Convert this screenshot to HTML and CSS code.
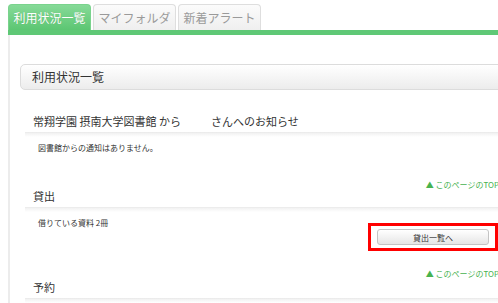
FILE: index.html
```html
<!DOCTYPE html>
<html lang="ja">
<head>
  <meta charset="UTF-8" />
  <title>利用状況一覧</title>
  <link rel="stylesheet" href="styles.css">
</head>
<body>
  <div class="page">
    <!-- Tabs -->
    <div class="tabs">
      <a class="tab active">利用状況一覧</a>
      <a class="tab">マイフォルダ</a>
      <a class="tab">新着アラート</a>
    </div>
    <div class="tab-bar"></div>

    <div class="content">
      <div class="panel-head">利用状況一覧</div>

      <!-- Notice -->
      <div class="section first">
        <h2>常翔学園 摂南大学図書館 から<span class="user"></span>さんへのお知らせ</h2>
        <p class="note">図書館からの通知はありません。</p>
        <a class="toplink">▲ このページのTOP</a>
      </div>

      <!-- Loans -->
      <div class="section">
        <h2>貸出</h2>
        <p class="note">借りている資料 2冊</p>
        <div class="btn-row">
          <div class="mark">
            <button class="btn">貸出一覧へ</button>
          </div>
        </div>
        <a class="toplink">▲ このページのTOP</a>
      </div>

      <!-- Reservations -->
      <div class="section last">
        <h2>予約</h2>
      </div>
    </div>
  </div>
</body>
</html>
```

FILE: styles.css
```css
* { box-sizing: border-box; margin: 0; padding: 0; }
body {
  background: #fff;
  width: 498px; height: 303px;
  overflow: hidden;
  font-family: "Noto Sans CJK JP", "Liberation Sans", sans-serif;
  color: #333;
}
.page {
  width: 503px;
  padding: 4px 0 0 8px;
}

/* —— Tabs —— */
.tabs { display: flex; gap: 2px; height: 26px; }
.tab {
  width: 83px; height: 26px;
  display: flex; align-items: center; justify-content: center;
  font-size: 12px; color: #9a9a9a;
  background: linear-gradient(to bottom, #fbfbfb, #efefef);
  border: 1px solid #dedede; border-bottom: none;
  border-radius: 4px 4px 0 0;
}
.tab.active {
  color: #fff;
  background: linear-gradient(to bottom, #86da98, #5cc672);
  border-color: #7ad38d;
  text-shadow: 0 0 1px rgba(0,0,0,0.15);
}
.tab-bar { height: 5px; background: #5fc876; }

/* —— Content —— */
.content {
  border-left: 2px solid #ececec;
  padding: 29px 0 0 10px;
  height: 268px;
}
.panel-head {
  height: 26px;
  border: 1px solid #dcdcdc;
  border-radius: 5px;
  background: linear-gradient(to bottom, #ffffff, #ececec);
  font-size: 12px; line-height: 24px;
  padding-left: 11px;
}
.section { margin-left: 5px; }
.section.first { margin-top: 24px; }
.section.last { margin-top: 2px; }
.section h2 {
  font-size: 11px; font-weight: normal;
  line-height: 14px; padding: 0 0 4px 8px;
  border-bottom: 1px solid #d8d8d8;
  position: relative;
}
.section h2::after {
  content: ""; position: absolute;
  left: 0; right: 0; top: 100%; height: 5px;
  background: linear-gradient(to bottom, #eee, rgba(255,255,255,0));
}
.user { display: inline-block; width: 30px; }
.note {
  font-size: 8px; line-height: 12px;
  margin-top: 9px; padding-left: 13px;
  color: #333;
}
.toplink {
  display: block; text-align: right;
  font-size: 8px; line-height: 8px;
  color: #47b34f; padding-right: 4px;
  margin-top: 27px;
  white-space: nowrap;
}
.btn-row {
  display: flex; justify-content: flex-end;
  padding-right: 5px;
  margin-top: -6px;
}
.mark {
  border: 3px solid #f00;
  padding: 3px 6px;
}
.btn {
  display: block;
  width: 112px; height: 16px;
  font-family: inherit; font-size: 8px; color: #333;
  background: linear-gradient(to bottom, #ffffff, #e6e6e6);
  border: 1px solid #c4c4c4; border-radius: 3px;
}
.btn-row + .toplink { margin-top: 19px; }
```
